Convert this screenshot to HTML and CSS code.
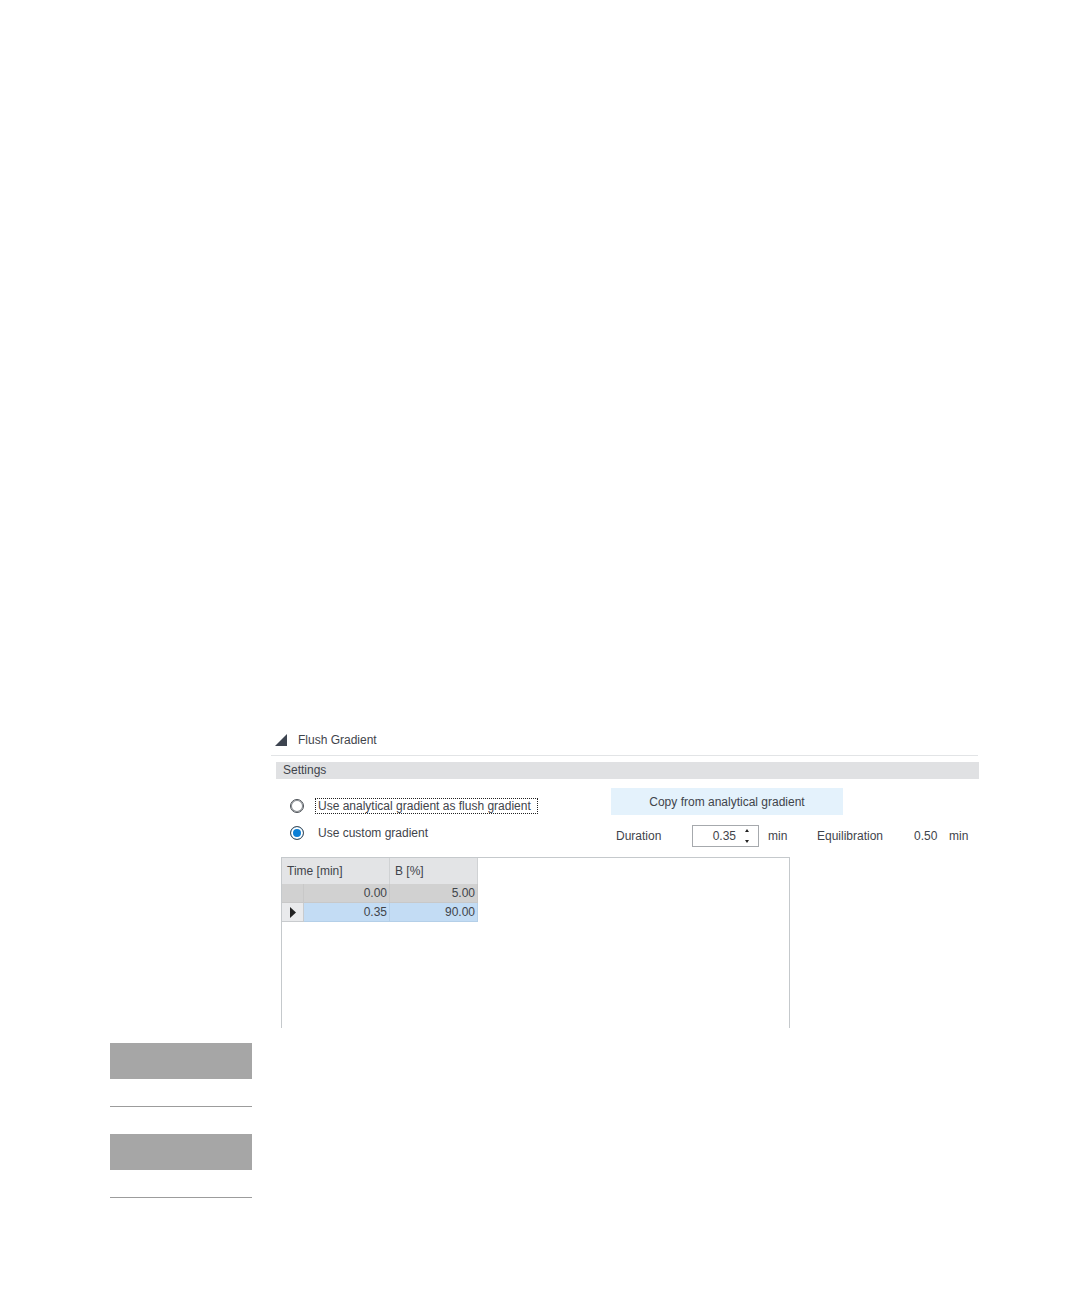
FILE: index.html
```html
<!DOCTYPE html>
<html lang="en">
<head>
<meta charset="utf-8">
<title>Flush Gradient</title>
<link rel="stylesheet" href="styles.css">
</head>
<body>
<main class="page">
  <section class="panel">
    <h1 class="panel-title">
      <svg class="fold" width="12" height="12" viewBox="0 0 12 12" aria-hidden="true"><path d="M12 0V12H0Z" fill="#3d4450"/></svg>
      Flush Gradient
    </h1>
    <h2 class="bar">Settings</h2>
    <form class="settings">
      <div class="modes">
        <label class="mode"><input type="radio" name="mode"><span class="mode-text focused">Use analytical gradient as flush gradient</span></label>
        <label class="mode"><input type="radio" name="mode" checked><span class="mode-text">Use custom gradient</span></label>
      </div>
      <div class="timing">
        <button type="button" class="copy">Copy from analytical gradient</button>
        <div class="values">
          <label class="duration-label" for="duration">Duration</label>
          <span class="spinner">
            <input id="duration" type="text" value="0.35">
            <span class="steps">
              <button type="button" aria-label="Increase"><svg width="6" height="4" viewBox="0 0 6 4"><path d="M3 0L5 3H1Z" fill="#222"/></svg></button>
              <button type="button" aria-label="Decrease"><svg width="6" height="4" viewBox="0 0 6 4"><path d="M1 1H5L3 4Z" fill="#222"/></svg></button>
            </span>
          </span>
          <span class="unit">min</span>
          <span class="equilibration">Equilibration</span>
          <span class="amount">0.50</span>
          <span>min</span>
        </div>
      </div>
    </form>
    <div class="grid-box">
      <table class="grid">
        <colgroup><col class="col-mark"><col class="col-time"><col class="col-b"></colgroup>
        <thead><tr><th colspan="2">Time [min]</th><th>B [%]</th></tr></thead>
        <tbody>
          <tr class="fixed"><td></td><td>0.00</td><td>5.00</td></tr>
          <tr class="current"><td class="mark"><svg width="6" height="11" viewBox="0 0 6 11" aria-hidden="true"><path d="M0 0L6 5.500L0 11Z" fill="#222"/></svg></td><td>0.35</td><td>90.00</td></tr>
        </tbody>
      </table>
    </div>
  </section>
  <div class="notes">
    <div class="note"></div>
    <div class="note"></div>
  </div>
</main>
</body>
</html>
```
FILE: styles.css
```css
* { box-sizing: border-box; }

body {
  margin: 0;
  background: #fff;
  color: #3f444b;
  font: 12px/18px "Liberation Sans", Arial, sans-serif;
}

.page { padding: 728px 101px 98px 110px; }
.panel { margin-left: 161px; }

.panel-title {
  display: flex;
  align-items: center;
  gap: 11px;
  height: 28px;
  margin: 0 1px 0 0;
  padding: 0 0 3px 4px;
  border-bottom: 1px solid #e2e4e6;
  font: inherit;
}

.bar {
  height: 17px;
  margin: 6px 0 0 5px;
  padding-left: 7px;
  background: #e0e1e3;
  font: inherit;
  line-height: 17px;
}

.settings {
  display: grid;
  grid-template-columns: 321px 1fr;
  padding: 9px 0 10px 19px;
}

.modes {
  display: flex;
  flex-direction: column;
  gap: 9px;
  padding-top: 9px;
}

.mode { display: flex; align-items: center; gap: 11px; height: 18px; }

.mode input {
  appearance: none;
  width: 14px;
  height: 14px;
  margin: 0;
  border: 1px solid #4a4f55;
  border-radius: 50%;
  background: #fff;
  box-shadow: inset 0 0 0 1px #8d9196;
}

.mode input:checked {
  background: #0a7fd6;
  box-shadow: inset 0 0 0 2px #fff;
}

.mode-text { padding: 0 6px 0 2px; line-height: 14px; border: 1px dotted transparent; }
.focused { border-color: #222; }

.copy {
  display: block;
  width: 232px;
  height: 27px;
  padding: 0;
  border: 0;
  background: #e4f2fc;
  color: inherit;
  font: inherit;
}

.values { display: flex; align-items: center; margin-top: 10px; padding-left: 5px; white-space: nowrap; }
.duration-label { width: 76px; }

.spinner {
  display: flex;
  width: 67px;
  height: 22px;
  border: 1px solid #a6a9ad;
}

.spinner input {
  width: 43px;
  padding: 0;
  border: 0;
  background: none;
  color: inherit;
  font: inherit;
  text-align: right;
}

.steps {
  display: flex;
  flex: 1;
  flex-direction: column;
  justify-content: space-between;
  align-items: center;
  padding: 3px 0;
}

.steps button { display: flex; padding: 0; border: 0; background: none; }

.unit { width: 58px; padding-left: 9px; }
.equilibration { width: 97px; }
.amount { width: 35px; }

.grid-box {
  width: 509px;
  height: 171px;
  margin-left: 10px;
  border: 1px solid #c5c9cc;
  border-bottom: 0;
}

.grid { width: 196px; table-layout: fixed; border-collapse: separate; border-spacing: 0; }
.col-mark { width: 22px; }
.col-time { width: 86px; }
.col-b { width: 88px; }

.grid th {
  height: 26px;
  padding: 0 5px;
  border-right: 1px solid #d0d2d4;
  background: #e3e4e6;
  font-weight: 400;
  text-align: left;
}

.grid td {
  height: 19px;
  padding: 0 2px;
  border-right: 1px solid #c8c8c8;
  border-bottom: 1px solid #c8c8c8;
  line-height: 18px;
  text-align: right;
}

.fixed td { background: #d1d1d1; }
.current td { border-color: #b4cfe8; background: #c3dcf4; }
.current .mark { padding-left: 8px; border-color: #c8cbce; background: #e9eaec; text-align: left; }
.mark svg { display: block; }

.notes { display: grid; gap: 27px; width: 142px; margin-top: 15px; }
.note { height: 64px; border-top: 36px solid #a6a6a6; border-bottom: 1px solid #9c9c9c; }
```
